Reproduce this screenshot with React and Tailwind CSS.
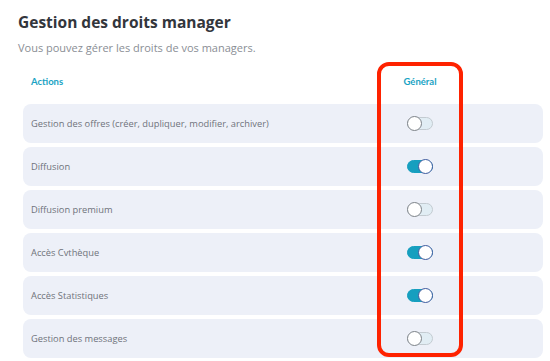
import { useState } from "react";

const initialRights = [
  { label: "Gestion des offres (créer, dupliquer, modifier, archiver)", on: false },
  { label: "Diffusion", on: true },
  { label: "Diffusion premium", on: false },
  { label: "Accès Cvthèque", on: true },
  { label: "Accès Statistiques", on: true },
  { label: "Gestion des messages", on: false },
];

function Toggle({ on, onClick }) {
  return (
    <button
      onClick={onClick}
      className={`relative w-[26px] h-[13px] rounded-full border ${
        on ? "bg-[#169fbf] border-[#169fbf]" : "bg-[#e1edf4] border-[#c3cbd1]"
      }`}
    >
      <span
        className={`absolute top-[-2px] w-[15px] h-[15px] rounded-full bg-white border ${
          on ? "right-[-1px] border-[#3d5a9e]" : "left-[-1px] border-[#7d8389]"
        }`}
      />
    </button>
  );
}

export default function App() {
  const [rights, setRights] = useState(initialRights);

  const toggle = (i) => {
    setRights(rights.map((r, idx) => (idx === i ? { ...r, on: !r.on } : r)));
  };

  return (
    <div className="w-[550px] h-[361px] overflow-hidden bg-white font-['Open_Sans',sans-serif]">
      <div className="relative pl-[18px] pr-[7px] pt-[12px]">
        <h1 className="text-[15.5px] font-bold text-[#33363c] leading-[20px]">
          Gestion des droits manager
        </h1>
        <p className="mt-[8px] text-[11px] text-[#8a8e95] leading-[16px]">
          Vous pouvez gérer les droits de vos managers.
        </p>

        {/* Table header */}
        <div className="flex items-center mt-[19px] h-[14px] pl-[13px]">
          <span className="flex-1 text-[9.5px] font-bold text-[#1aa3c4] font-['Lato',sans-serif]">Actions</span>
          <span className="w-[46px] mr-[100px] text-center text-[9.5px] font-bold text-[#1aa3c4] font-['Lato',sans-serif]">
            Général
          </span>
        </div>

        {/* Rows */}
        <div className="mt-[15px] ml-[5px] flex flex-col gap-[4px]">
          {rights.map((r, i) => (
            <div key={i} className="flex items-center h-[39px] rounded-[8px] bg-[#edf0f8] pl-[8px]">
              <span className="flex-1 text-[9.3px] text-[#6f737b]">{r.label}</span>
              <div className="w-[46px] mr-[100px] flex justify-center">
                <Toggle on={r.on} onClick={() => toggle(i)} />
              </div>
            </div>
          ))}
        </div>

        {/* Highlight box */}
        <div className="absolute left-[377px] top-[62px] w-[86px] h-[295px] rounded-[12px] border-[4px] border-[#fe2200] pointer-events-none" />
      </div>
    </div>
  );
}
